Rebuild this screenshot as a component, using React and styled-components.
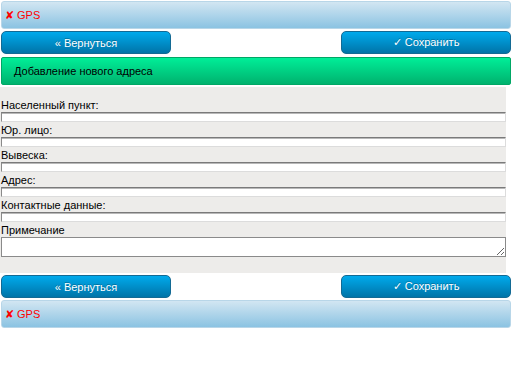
import * as React from 'react';
import styled, { createGlobalStyle } from 'styled-components';

const GlobalStyle = createGlobalStyle`
  body {
    margin: 0;
    background: #fff;
    font-family: "Liberation Sans", Arial, sans-serif;
    font-size: 11px;
  }
`;

const Page = styled.div`
  width: 512px;
  padding: 1px 1px;
  box-sizing: border-box;
  display: flex;
  flex-direction: column;
  gap: 2px;
`;

const GpsBar = styled.div`
  height: 28px;
  box-sizing: border-box;
  display: flex;
  align-items: center;
  padding-left: 3px;
  border: 1px solid #b8d6e8;
  border-radius: 3px;
  background: linear-gradient(#d2e6f2, #8bc3e2);
  color: #ff0000;
  font-size: 11px;
`;

const ButtonRow = styled.div`
  display: flex;
  justify-content: space-between;
  margin-bottom: ${(p) => (p.$spaced ? '1px' : '0')};
`;

const Button = styled.button`
  width: 170px;
  height: 23px;
  padding: 0;
  border: 1px solid #136a94;
  border-radius: 5px;
  background: linear-gradient(#00aaec, #0074a8);
  color: #fff;
  font-family: "Liberation Sans", Arial, sans-serif;
  font-size: 11px;
  text-shadow: 0 -1px 0 rgba(0, 0, 0, 0.25);
  cursor: pointer;
`;

const TitleBar = styled.div`
  height: 28px;
  box-sizing: border-box;
  display: flex;
  align-items: center;
  padding-left: 12px;
  border: 1px solid #00a765;
  border-radius: 2px;
  background: linear-gradient(#00ee98, #00b26e);
  color: #000;
  font-size: 11px;
`;

const Form = styled.div`
  width: 506px;
  margin-left: -1px;
  padding: 12px 0 16px 1px;
  box-sizing: border-box;
  background: #edecea;
  display: flex;
  flex-direction: column;
  gap: 2px;
`;

const Field = styled.label`
  display: flex;
  flex-direction: column;
  color: #000;
  font-size: 11px;
  line-height: 13px;
`;

const Input = styled.input`
  display: block;
  width: 100%;
  height: 10px;
  box-sizing: border-box;
  margin: 0;
  padding: 0;
  border: 1px solid #dcdcdc;
  border-top-color: #7a7a7a;
  border-left-color: #8a8a8a;
  box-shadow: inset 0 1px 0 #b8b8b8;
  background: #fff;
  font-size: 8px;
`;

const TextArea = styled.textarea`
  display: block;
  width: 100%;
  height: 20px;
  box-sizing: border-box;
  margin: 0;
  padding: 0;
  border: 1px solid #8a8a8a;
  background: #fff;
  font-size: 8px;
`;

const fields = [
  'Населенный пункт:',
  'Юр. лицо:',
  'Вывеска:',
  'Адрес:',
  'Контактные данные:',
];

const Buttons = ({ spaced }) => (
  <ButtonRow $spaced={spaced}>
    <Button>« Вернуться</Button>
    <Button>✓ Сохранить</Button>
  </ButtonRow>
);

const App = () => (
  <Page>
    <GlobalStyle />
    <GpsBar>✘ GPS</GpsBar>
    <Buttons spaced />
    <TitleBar>Добавление нового адреса</TitleBar>
    <Form>
      {fields.map((f) => (
        <Field key={f}>
          {f}
          <Input />
        </Field>
      ))}
      <Field>
        Примечание
        <TextArea />
      </Field>
    </Form>
    <Buttons />
    <GpsBar>✘ GPS</GpsBar>
  </Page>
);

export default App;
